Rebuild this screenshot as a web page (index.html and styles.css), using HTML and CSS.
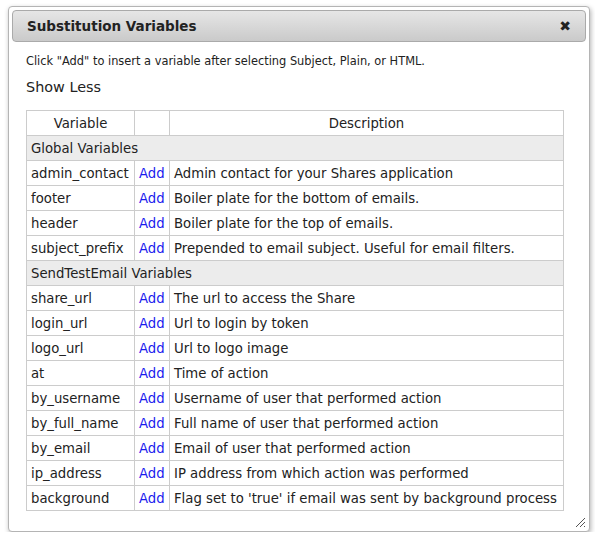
FILE: index.html
```html
<!DOCTYPE html>
<html lang="en">
<head>
    <meta charset="UTF-8">
    <title>Substitution Variables</title>
    <link rel="stylesheet" href="styles.css">
</head>
<body>
    <div class="dialog">
        <div class="dialog-titlebar">
            <span class="dialog-title">Substitution Variables</span>
            <span class="dialog-close">&#10006;</span>
        </div>
        <div class="dialog-content">
            <p class="hint">Click "Add" to insert a variable after selecting Subject, Plain, or HTML.</p>
            <div class="show-less">Show Less</div>
            <table class="vars">
                <tr>
                    <th class="col-name">Variable</th>
                    <th class="col-add"></th>
                    <th>Description</th>
                </tr>
                <tr class="group"><td colspan="3">Global Variables</td></tr>
                <tr><td>admin_contact</td><td><a href="#">Add</a></td><td>Admin contact for your Shares application</td></tr>
                <tr><td>footer</td><td><a href="#">Add</a></td><td>Boiler plate for the bottom of emails.</td></tr>
                <tr><td>header</td><td><a href="#">Add</a></td><td>Boiler plate for the top of emails.</td></tr>
                <tr><td>subject_prefix</td><td><a href="#">Add</a></td><td>Prepended to email subject. Useful for email filters.</td></tr>
                <tr class="group"><td colspan="3">SendTestEmail Variables</td></tr>
                <tr><td>share_url</td><td><a href="#">Add</a></td><td>The url to access the Share</td></tr>
                <tr><td>login_url</td><td><a href="#">Add</a></td><td>Url to login by token</td></tr>
                <tr><td>logo_url</td><td><a href="#">Add</a></td><td>Url to logo image</td></tr>
                <tr><td>at</td><td><a href="#">Add</a></td><td>Time of action</td></tr>
                <tr><td>by_username</td><td><a href="#">Add</a></td><td>Username of user that performed action</td></tr>
                <tr><td>by_full_name</td><td><a href="#">Add</a></td><td>Full name of user that performed action</td></tr>
                <tr><td>by_email</td><td><a href="#">Add</a></td><td>Email of user that performed action</td></tr>
                <tr><td>ip_address</td><td><a href="#">Add</a></td><td>IP address from which action was performed</td></tr>
                <tr><td>background</td><td><a href="#">Add</a></td><td>Flag set to 'true' if email was sent by background process</td></tr>
            </table>
        </div>
        <svg class="resize-grip" width="12" height="12" viewBox="0 0 12 12">
            <path d="M11 2 L2 11 M11 6 L6 11 M11 10 L10 11" stroke="#555" stroke-width="1"/>
        </svg>
    </div>
</body>
</html>
```

FILE: styles.css
```css
body {
    margin: 0;
    background: #fff;
    font-family: "DejaVu Sans", Verdana, sans-serif;
    color: #222;
}

.dialog {
    position: relative;
    margin: 6px 0 0 8px;
    width: 580px;
    height: 524px;
    border: 1px solid #b4b4b4;
    border-radius: 4px;
    background: #fff;
    box-shadow: 1px 2px 5px rgba(0, 0, 0, 0.3);
}

.dialog-titlebar {
    display: flex;
    align-items: center;
    justify-content: space-between;
    margin: 3px;
    height: 30px;
    padding: 0 14px 0 14px;
    border: 1px solid #aaa;
    border-radius: 4px;
    background: linear-gradient(#e6e6e6, #cacaca);
}

.dialog-title {
    font-size: 13.5px;
    font-weight: bold;
    color: #222;
}

.dialog-close {
    font-size: 14px;
    font-weight: bold;
    color: #222;
}

.dialog-content {
    padding: 0 17px;
}

.hint {
    margin: 12px 0 0;
    font-size: 11.4px;
}

.show-less {
    margin-top: 11px;
    font-size: 14.4px;
}

.vars {
    margin-top: 15px;
    width: 538px;
    border-collapse: collapse;
    font-size: 13.25px;
}

.vars th,
.vars td {
    height: 24px;
    padding: 0 4px;
    border: 1px solid #ccc;
    text-align: left;
    white-space: nowrap;
}

.vars th {
    font-weight: normal;
    text-align: center;
}

.col-name {
    width: 99px;
}

.col-add {
    width: 26px;
}

.vars a {
    color: #1a1aee;
    text-decoration: none;
}

.group td {
    background: #ececec;
}

.resize-grip {
    position: absolute;
    right: 3px;
    bottom: 3px;
}
```
